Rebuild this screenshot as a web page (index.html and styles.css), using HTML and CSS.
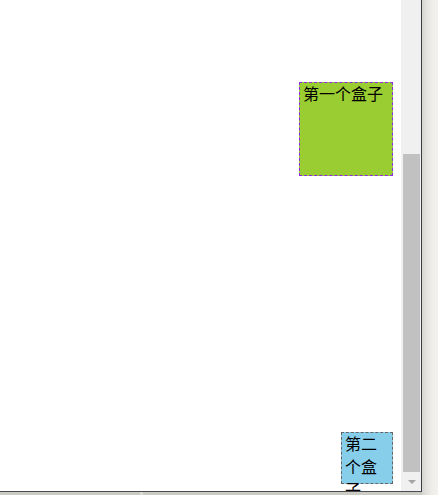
FILE: index.html
```html
<!DOCTYPE html>
<html lang="zh">
<head>
<meta charset="utf-8">
<title>盒子</title>
<link rel="stylesheet" href="styles.css">
</head>
<body>
<div class="screen">
  <div class="frame">
    <div class="page">
      <div class="box box-one"><div class="label">第一个盒子</div></div>
      <div class="box box-two"><div class="label">第二个盒子</div></div>
    </div>
    <div class="vscroll">
      <div class="track"></div>
      <div class="thumb"></div>
      <div class="arrow"><span class="tri"></span></div>
    </div>
  </div>
  <div class="status">
    <div class="seg seg-a"></div>
    <div class="divider"></div>
    <div class="seg seg-b"></div>
  </div>
</div>
</body>
</html>
```

FILE: styles.css
```css
html, body {
  margin: 0;
  padding: 0;
}
body {
  width: 438px;
  height: 495px;
  overflow: hidden;
  background: linear-gradient(to right, #d6d6d1 0px, #d6d6d1 422px, #e2e1dd 426px, #efeeea 432px, #f2f1ed 438px);
}
.screen {
  width: 438px;
  height: 495px;
  display: flex;
  flex-direction: column;
}
.frame {
  width: 421px;
  height: 491px;
  display: flex;
  border-right: 1px solid #3b3b43;
  border-bottom: 1px solid #4a4a50;
  background: #ffffff;
}
.page {
  width: 401px;
  height: 491px;
  overflow: hidden;
  display: flex;
  flex-direction: column;
  align-items: flex-end;
  padding: 82px 8px 0 0;
  box-sizing: border-box;
  font-family: "Noto Sans CJK SC", "Noto Sans", sans-serif;
  font-size: 16px;
  line-height: 23px;
  color: #000;
}
.box {
  box-sizing: border-box;
  padding: 0 3px;
  flex: none;
}
.label {
  margin-top: -1px;
}
.box-one {
  width: 94px;
  height: 94px;
  background: #9acd32;
  border: 1px dashed #8a2be2;
}
.box-two {
  width: 52px;
  height: 52px;
  margin-top: 256px;
  background: #87ceeb;
  border: 1px dashed #666666;
}
.vscroll {
  width: 20px;
  height: 491px;
  display: flex;
  flex-direction: column;
  background: #f0f0f0;
}
.track {
  height: 154px;
  flex: none;
}
.thumb {
  height: 318px;
  margin: 0 1px 0 2px;
  background: #c1c1c1;
  flex: none;
}
.arrow {
  flex: 1;
  display: flex;
  justify-content: center;
  align-items: center;
}
.tri {
  width: 0;
  height: 0;
  border-left: 4px solid transparent;
  border-right: 4px solid transparent;
  border-top: 4px solid #a3a3a3;
  margin-left: 1px;
}
.status {
  width: 422px;
  height: 3px;
  display: flex;
}
.seg {
  background: #cbcbc4;
}
.seg-a {
  width: 140px;
}
.divider {
  width: 3px;
  background: #dcdcd6;
}
.seg-b {
  flex: 1;
}
```
